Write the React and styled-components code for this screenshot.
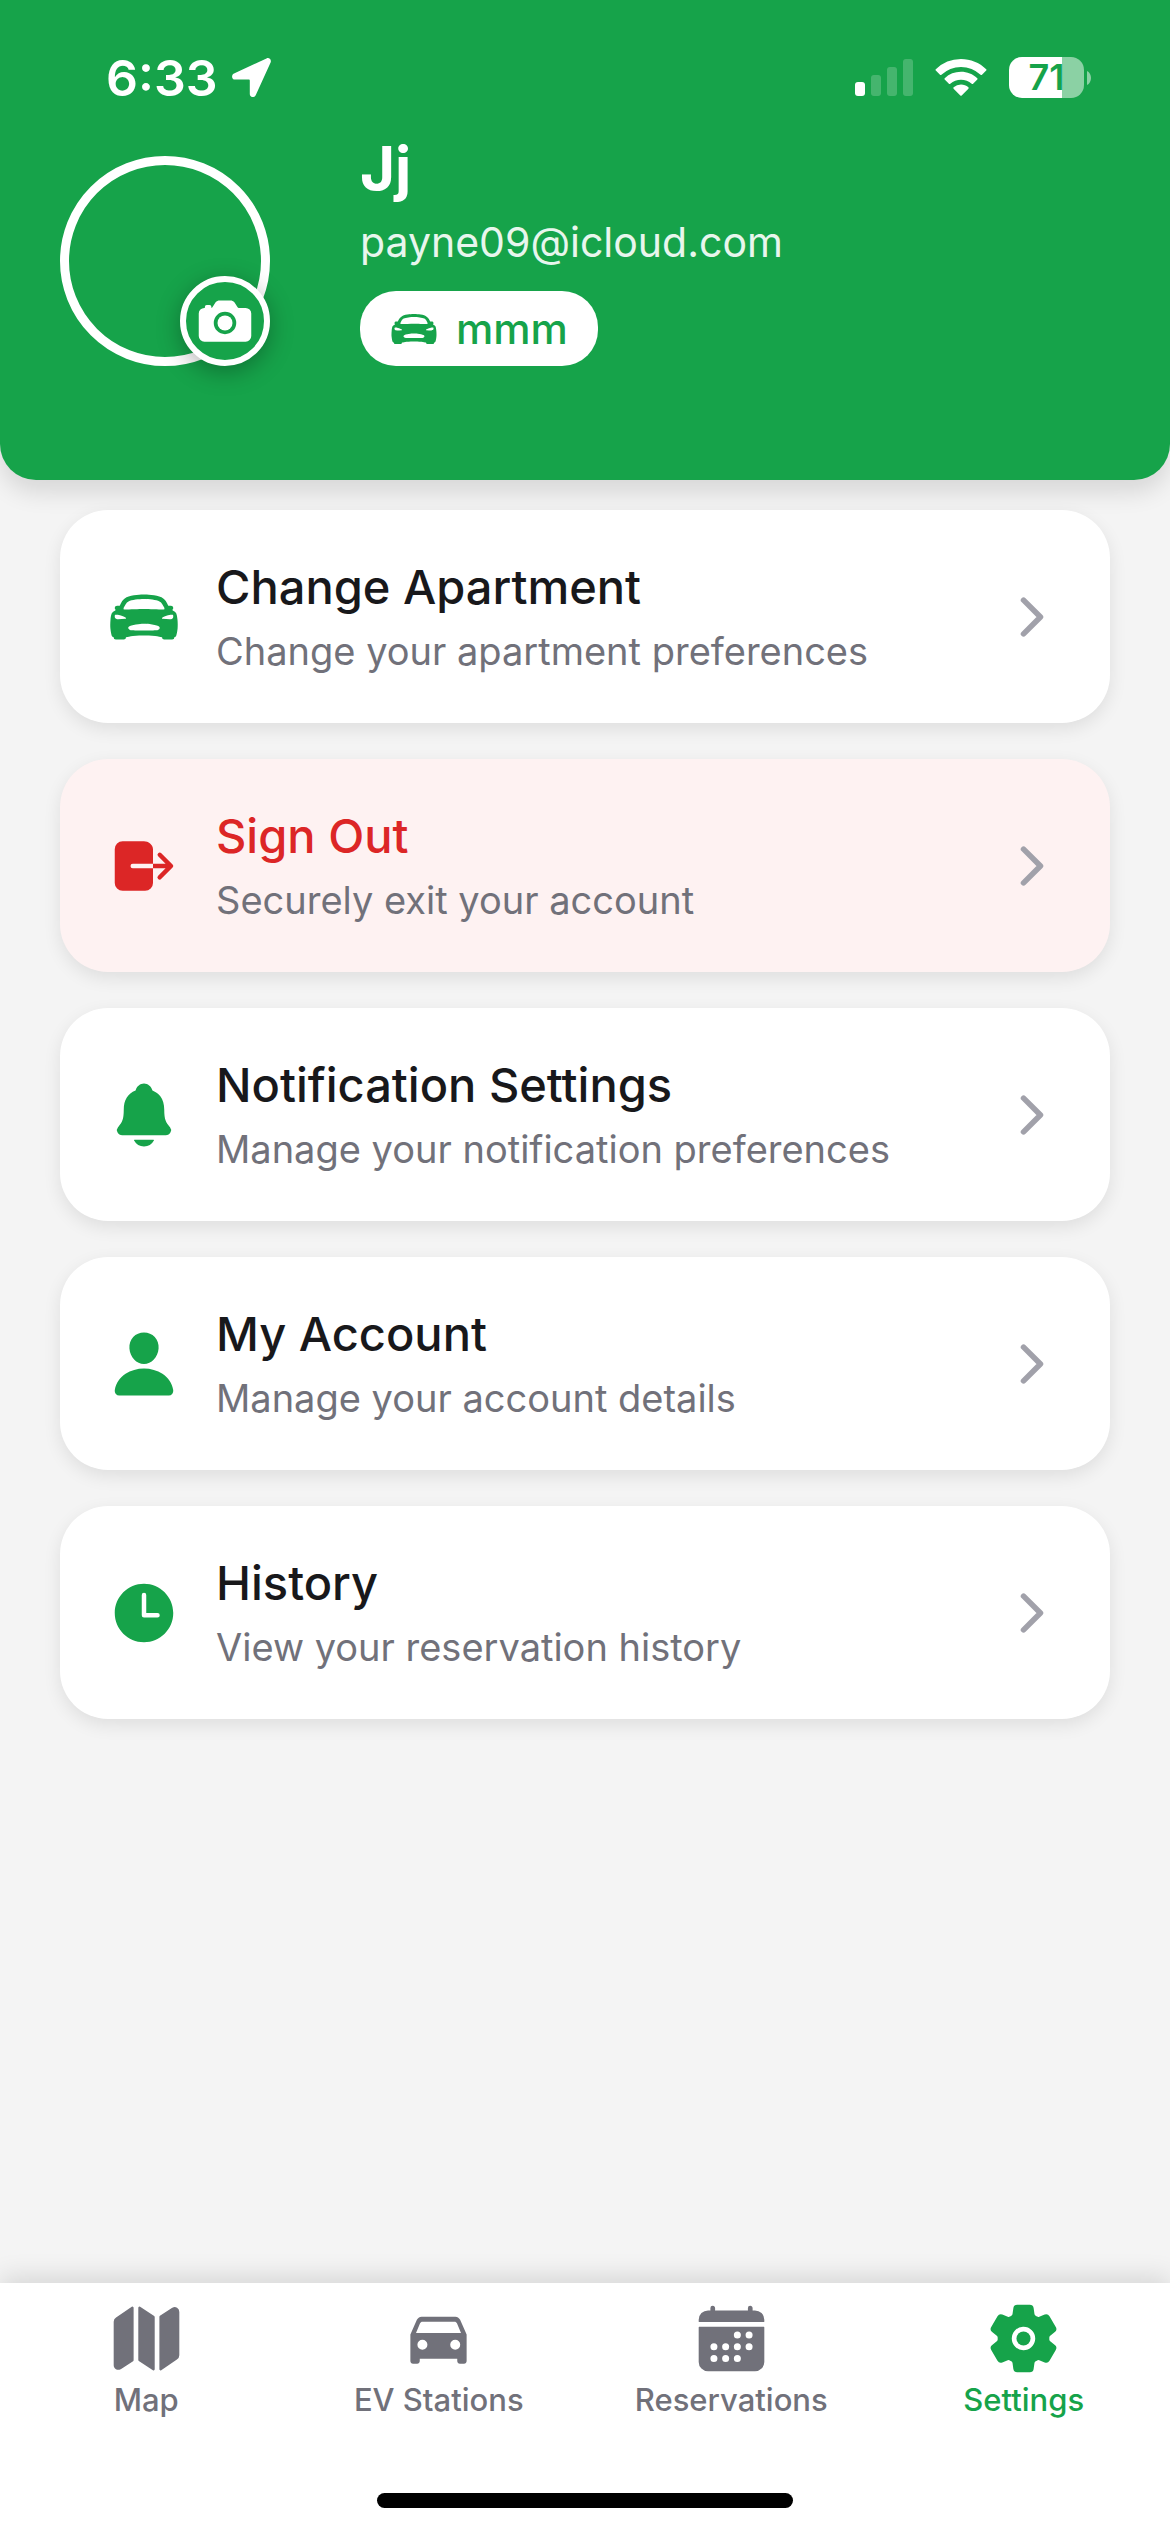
import React from 'react'
import styled, { createGlobalStyle } from 'styled-components'
import {
  IoCalendar,
  IoCamera,
  IoCarSport,
  IoChevronForward,
  IoLogOut,
  IoMap,
  IoNotifications,
  IoPerson,
  IoSettings,
  IoTime
} from 'react-icons/io5'

const GlobalStyle = createGlobalStyle`
  * {
    box-sizing: border-box;
  }
  body {
    margin: 0;
    background: #f4f4f4;
    font-family: Inter, 'Liberation Sans', sans-serif;
  }
  button {
    border: none;
    padding: 0;
    font: inherit;
    cursor: pointer;
  }
`

const CarIcon = () => (
  <svg viewBox='0 0 24 24' fill='currentColor' aria-hidden='true'>
    <path
      fillRule='evenodd'
      d='M18.92 6.01C18.62 5.42 18.16 5 17.4 5H6.6c-.76 0-1.22.42-1.52 1.01L3 10.7V19.200c0 .500.35.850.85.850h1.300c.500 0 .85-.35.85-.85v-.7h12v.7c0 .500.35.850.85.850h1.300c.500 0 .85-.35.85-.85v-8.500zM6.9 6.600h10.200c.4 0 .65.200.8.500l1.300 3.100H4.800l1.300-3.100c.15-.3.4-.5.8-.5zM6.850 12.400a1.600 1.600 0 1 1 0 3.200 1.600 1.600 0 0 1 0-3.200zm10.500 0a1.600 1.600 0 1 1 0 3.200 1.600 1.600 0 0 1 0-3.200z'
    />
  </svg>
)

const ITEMS = [
  { title: 'Change Apartment', text: 'Change your apartment preferences', icon: IoCarSport },
  { title: 'Sign Out', text: 'Securely exit your account', icon: IoLogOut, danger: true },
  { title: 'Notification Settings', text: 'Manage your notification preferences', icon: IoNotifications },
  { title: 'My Account', text: 'Manage your account details', icon: IoPerson },
  { title: 'History', text: 'View your reservation history', icon: IoTime }
]

const TABS = [
  { label: 'Map', icon: IoMap },
  { label: 'EV Stations', icon: CarIcon },
  { label: 'Reservations', icon: IoCalendar },
  { label: 'Settings', icon: IoSettings, active: true }
]

const StatusIcons = () => (
  <Indicators>
    <svg width='58' height='37' viewBox='0 0 58 37' fill='#fff' aria-hidden='true'>
      <rect y='23' width='10' height='14' rx='3' />
      <g opacity='0.2'>
        <rect x='16' y='16' width='10' height='21' rx='3' />
        <rect x='32' y='8' width='10' height='29' rx='3' />
        <rect x='48' width='10' height='37' rx='3' />
      </g>
    </svg>
    <svg width='52' height='37' viewBox='0 0 52 37' fill='#fff' aria-hidden='true'>
      <path d='M26 0c9.500 0 18.500 3.700 25.200 10.200.4.400.4 1 0 1.400L47 15.800c-.4.400-1 .4-1.400 0A28.300 28.300 0 0 0 6.400 15.800c-.4.400-1 .4-1.400 0L.8 11.600c-.4-.4-.4-1 0-1.400A36.200 36.200 0 0 1 26 0z' />
      <path d='M26 12.800c6.100 0 11.900 2.300 16.300 6.400.4.400.4 1 0 1.400l-4.200 4.200c-.4.400-1 .4-1.400 0a15.800 15.800 0 0 0-21.400 0c-.4.400-1 .4-1.400 0l-4.200-4.200c-.4-.4-.4-1 0-1.400A24 24 0 0 1 26 12.800z' />
      <path d='M26 25.600c2.700 0 5.300 1 7.400 2.700.4.400.4 1 0 1.400l-6.700 6.800c-.4.400-1 .4-1.400 0l-6.700-6.800c-.4-.4-.4-1 0-1.400a11.600 11.600 0 0 1 7.400-2.700z' />
    </svg>
    <Battery>
      <BatteryLevel>71</BatteryLevel>
      <svg width='4' height='14' viewBox='0 0 4 14' fill='#fff' opacity='0.5' aria-hidden='true'>
        <path d='M0 0c2.400 1 4 3.800 4 7s-1.600 6-4 7z' />
      </svg>
    </Battery>
  </Indicators>
)

const MenuItem = ({ title, text, icon: Icon, danger }) => (
  <Card $danger={danger}>
    <CardIcon $danger={danger}><Icon /></CardIcon>
    <CardBody>
      <CardTitle $danger={danger}>{title}</CardTitle>
      <CardText>{text}</CardText>
    </CardBody>
    <Chevron />
  </Card>
)

export default function App () {
  return (
    <Screen>
      <GlobalStyle />
      <Header>
        <StatusBar>
          <Clock>
            6:33
            <svg width='39' height='39' viewBox='0 0 39 39' fill='#fff' aria-hidden='true'>
              <path d='M34.500.4 2 15.600C-1 17-.4 21.600 3 21.600h14c.5 0 .8.300.8.800V36c0 3.400 4.600 4.200 5.900 1.200L38.600 4.500C39.700 1.800 37.300-.8 34.500.4z' />
            </svg>
          </Clock>
          <StatusIcons />
        </StatusBar>
        <Profile>
          <Avatar>
            <CameraButton aria-label='Change photo'><IoCamera /></CameraButton>
          </Avatar>
          <Details>
            <Name>Jj</Name>
            <Email>payne09@icloud.com</Email>
            <Badge><IoCarSport />mmm</Badge>
          </Details>
        </Profile>
      </Header>
      <Menu>
        {ITEMS.map(item => <MenuItem key={item.title} {...item} />)}
      </Menu>
      <TabBar>
        <Tabs>
          {TABS.map(({ label, icon: Icon, active }) => (
            <Tab key={label} href='#' $active={active}>
              <Icon />
              {label}
            </Tab>
          ))}
        </Tabs>
        <HomeIndicator />
      </TabBar>
    </Screen>
  )
}

const Screen = styled.div`
  display: flex;
  flex-direction: column;
  min-height: 100vh;
`

const Header = styled.header`
  padding: 24px 0 114px;
  border-radius: 0 0 36px 36px;
  background: #16a34a;
  color: #fff;
  box-shadow: 0 12px 24px rgba(0, 0, 0, 0.12);
`

const StatusBar = styled.div`
  display: flex;
  align-items: center;
  justify-content: space-between;
  height: 107px;
  padding: 0 79px 0 106px;
`

const Clock = styled.div`
  display: flex;
  align-items: center;
  gap: 14px;
  font-size: 50px;
  font-weight: 600;
`

const Indicators = styled.div`
  display: flex;
  align-items: center;
  gap: 22px;
`

const Battery = styled.div`
  display: flex;
  align-items: center;
  gap: 3px;
`

const BatteryLevel = styled.div`
  width: 75px;
  border-radius: 13px;
  background: linear-gradient(to right, #fff 53px, #8bd1a4 53px);
  color: #16a34a;
  font-size: 36px;
  font-weight: 600;
  line-height: 41px;
  text-align: center;
`

const Profile = styled.div`
  display: flex;
  align-items: flex-end;
  gap: 90px;
  padding: 0 60px;
`

const Avatar = styled.div`
  display: flex;
  flex-shrink: 0;
  position: relative;
  width: 210px;
  height: 210px;
  border: 9px solid #fff;
  border-radius: 50%;
`

const CameraButton = styled.button`
  position: absolute;
  right: -9px;
  bottom: -9px;
  display: flex;
  align-items: center;
  justify-content: center;
  width: 90px;
  height: 90px;
  && {
    border: 6px solid #fff;
  }
  border-radius: 50%;
  background: #16a34a;
  color: #fff;
  box-shadow: 0 6px 24px rgba(0, 0, 0, 0.3);

  svg {
    flex-shrink: 0;
    width: 60px;
    height: 60px;
  }
`

const Details = styled.div`
  display: flex;
  flex-direction: column;
  align-items: flex-start;
`

const Name = styled.h1`
  margin: 0 0 12px;
  font-size: 60px;
  font-weight: 700;
  line-height: 74px;
`

const Email = styled.p`
  margin: 0 0 24px;
  font-size: 41px;
  line-height: 50px;
  opacity: 0.9;
`

const Badge = styled.div`
  display: flex;
  align-items: center;
  gap: 18px;
  height: 75px;
  padding: 0 30px;
  border-radius: 36px;
  background: #fff;
  color: #16a34a;
  font-size: 42px;
  font-weight: 500;

  svg {
    width: 48px;
    height: 48px;
  }
`

const Menu = styled.main`
  display: flex;
  flex: 1;
  flex-direction: column;
  gap: 36px;
  padding: 30px 60px;
`

const Card = styled.button`
  display: flex;
  align-items: center;
  gap: 36px;
  && {
    padding: 48px;
  }
  border-radius: 48px;
  background: ${props => props.$danger ? '#fef2f2' : '#fff'};
  text-align: left;
  box-shadow: 0 6px 18px rgba(0, 0, 0, 0.09);
`

const CardIcon = styled.span`
  display: flex;
  color: ${props => props.$danger ? '#dc2626' : '#16a34a'};

  svg {
    width: 72px;
    height: 72px;
  }
`

const CardBody = styled.span`
  display: flex;
  flex: 1;
  flex-direction: column;
  gap: 12px;
`

const CardTitle = styled.span`
  color: ${props => props.$danger ? '#dc2626' : '#18181b'};
  font-size: 47px;
  font-weight: 500;
  line-height: 58px;
`

const CardText = styled.span`
  color: #71717a;
  font-size: 38px;
  line-height: 47px;
`

const Chevron = styled(IoChevronForward)`
  width: 60px;
  height: 60px;
  color: #a1a1aa;
`

const TabBar = styled.nav`
  padding-bottom: 24px;
  background: #fff;
  box-shadow: 0 -6px 24px rgba(0, 0, 0, 0.12);
`

const Tabs = styled.div`
  display: grid;
  grid-template-columns: repeat(4, 1fr);
  padding-top: 18px;
`

const Tab = styled.a`
  display: flex;
  flex-direction: column;
  align-items: center;
  gap: 6px;
  color: ${props => props.$active ? '#16a34a' : '#71717a'};
  font-size: 31px;
  font-weight: 500;
  line-height: 36px;
  text-decoration: none;

  svg {
    width: 75px;
    height: 75px;
  }
`

const HomeIndicator = styled.div`
  width: 416px;
  height: 15px;
  margin: 75px auto 0;
  border-radius: 8px;
  background: #000;
`
